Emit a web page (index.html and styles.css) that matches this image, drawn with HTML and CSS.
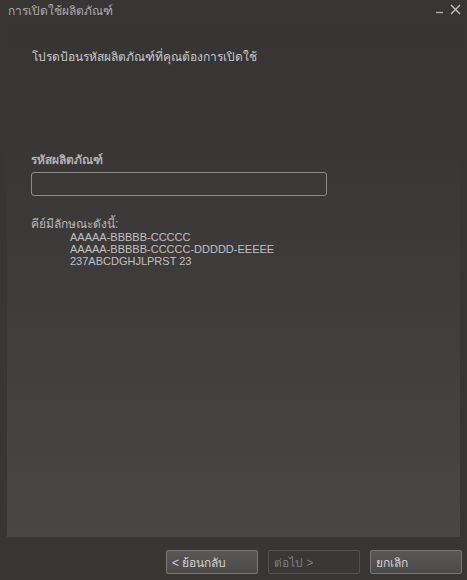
FILE: index.html
```html
<!DOCTYPE html>
<html lang="th">
<head>
<meta charset="utf-8">
<link rel="stylesheet" href="styles.css">
</head>
<body>
<div class="window">
  <div class="titlebar">
    <span class="title">การเปิดใช้ผลิตภัณฑ์</span>
    <div class="controls">
      <svg class="ctl" width="10" height="10" viewBox="0 0 10 10"><path d="M1 8.5H8" stroke="#b0b0b0" stroke-width="1.4"/></svg>
      <svg class="ctl" width="11" height="11" viewBox="0 0 11 11"><path d="M1 1L10 10M10 1L1 10" stroke="#c4c4c4" stroke-width="1.4"/></svg>
    </div>
  </div>
  <div class="panel">
    <p class="intro">โปรดป้อนรหัสผลิตภัณฑ์ที่คุณต้องการเปิดใช้</p>
    <label class="label">รหัสผลิตภัณฑ์</label>
    <div class="input"></div>
    <p class="hint">คีย์มีลักษณะดังนี้:</p>
    <div class="examples">
      <div>AAAAA-BBBBB-CCCCC</div>
      <div>AAAAA-BBBBB-CCCCC-DDDDD-EEEEE</div>
      <div>237ABCDGHJLPRST 23</div>
    </div>
  </div>
  <div class="footer">
    <button class="btn">&lt; ย้อนกลับ</button>
    <button class="btn disabled">ต่อไป &gt;</button>
    <button class="btn">ยกเลิก</button>
  </div>
</div>
</body>
</html>
```
FILE: styles.css
```css
html, body {
  margin: 0;
  padding: 0;
  background: #383634;
}
.window {
  width: 467px;
  height: 580px;
  display: flex;
  flex-direction: column;
  font-family: Tahoma, "Liberation Sans", "DejaVu Sans", sans-serif;
  font-size: 12px;
  background: #383634;
}
.titlebar {
  height: 24px;
  display: flex;
  align-items: center;
  justify-content: space-between;
  padding: 0 6px 0 8px;
}
.title {
  color: #a9a9a9;
  font-size: 12px;
  margin-top: -4px;
}
.controls {
  display: flex;
  gap: 5px;
  align-items: center;
  margin-top: -6px;
}
.panel {
  margin: 0 7px 0 7px;
  height: 513px;
  background: linear-gradient(#363533 0%, #393837 30%, #484745 100%);
  padding: 0 0 0 24px;
  color: #c4c4c4;
}
.intro {
  margin: 23px 0 0 1px;
  font-size: 12px;
  color: #c8c8c8;
}
.label {
  display: block;
  margin-top: 84px;
  font-size: 12px;
  font-weight: normal;
  color: #bdbdbd;
  -webkit-text-stroke: 0.3px #bdbdbd;
}
.input {
  margin-top: 3px;
  width: 294px;
  height: 22px;
  border: 1px solid #8c8b89;
  border-radius: 3px;
  background: #3a3938;
}
.hint {
  margin: 22px 0 0 0;
  font-size: 12px;
  color: #b8b8b8;
  line-height: 13px;
}
.examples {
  margin-left: 39px;
  font-family: "Liberation Sans", Arial, sans-serif;
  font-size: 11px;
  line-height: 12px;
  color: #c0c0c0;
}
.footer {
  display: flex;
  justify-content: flex-end;
  gap: 10px;
  padding: 13px 5px 0 0;
}
.btn {
  width: 92px;
  height: 24px;
  padding: 0 0 0 5px;
  text-align: left;
  font-family: Tahoma, "Liberation Sans", "DejaVu Sans", sans-serif;
  font-size: 12px;
  color: #d2d2d2;
  background: linear-gradient(#5a5856, #4c4a48);
  border: 1px solid #7a7876;
  border-radius: 2px;
}
.btn.disabled {
  color: #7e7d7b;
  background: #393836;
  border-color: #545250;
}
```
